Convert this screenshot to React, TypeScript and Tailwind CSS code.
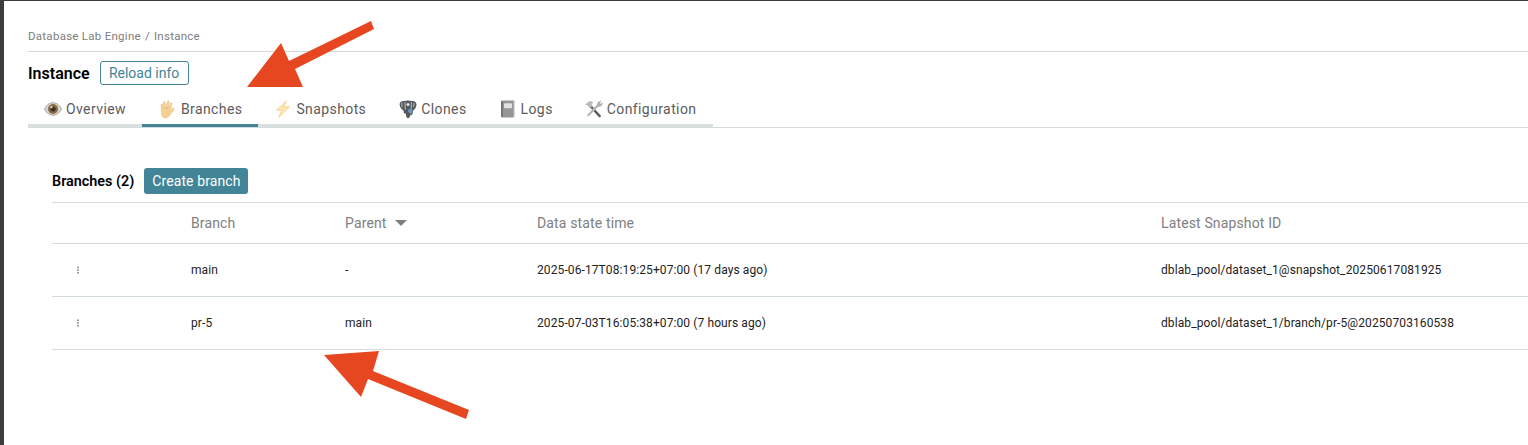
import React from "react";

const Eye = () => (
  <svg width="18" height="14" viewBox="0 0 18 14">
    <path d="M0.5 7C3 2.2 6 0.8 9 0.8S15 2.2 17.5 7C15 11.8 12 13.2 9 13.2S3 11.8 0.5 7Z" fill="#d9d5d0" stroke="#9a9490" strokeWidth="0.8" />
    <circle cx="9" cy="7" r="5" fill="#8a6a42" />
    <circle cx="9" cy="7" r="2.6" fill="#3a3028" />
    <circle cx="7.4" cy="5.2" r="1.1" fill="#e8e4de" />
  </svg>
);
const Hand = () => (
  <svg width="18" height="19" viewBox="0 0 18 19">
    <path d="M3 4.5C3 3.4 4.6 3.4 4.8 4.5L5.6 8.5L5.4 2.2C5.4 1 7.1 1 7.2 2.2L7.8 7.5L9.5 1.5C9.8 0.4 11.4 0.8 11.2 2L10.3 8L12.4 3.2C12.8 2.2 14.3 2.8 14 3.9L12.6 9.8L14.6 8.3C15.8 7.5 16.9 8.7 16 9.7L12.4 14.6C11.2 16.8 9.6 18 7.4 18C4.6 18 3.5 16 3.4 13L3 4.5Z" fill="#f5d092" stroke="#e9bc78" strokeWidth="0.4" />
    <path d="M7.6 8.2L9.9 8.4" stroke="#dca85e" strokeWidth="0.7" fill="none" />
  </svg>
);
const Bolt = () => (
  <svg width="16" height="18" viewBox="0 0 16 18">
    <path d="M11.5 0.5L1.5 10.2L6.6 10.2L3.8 17.5L14.5 6.8L9 6.8Z" fill="#fbe6b0" stroke="#f5c887" strokeWidth="0.7" strokeLinejoin="round" />
  </svg>
);
const Elephant = () => (
  <svg width="18" height="19" viewBox="0 0 18 19">
    <path d="M0.6 4.2C0.6 1.8 3 0.6 5.4 1C7.2 0.2 10.8 0.2 12.6 1C15 0.6 17.5 1.8 17.5 4.4C17.5 7.2 15.6 9.4 14.2 10.6L13.6 13.8C13.2 15.4 11.9 15.6 11.4 14.6C11.3 16.8 10.4 18.2 9 18.2C7.6 18.2 6.8 16 6.8 13.6C5 13.9 4.4 12.4 4.7 10.7C2.4 9.4 0.6 6.9 0.6 4.2Z" fill="#55585d" />
    <path d="M2.8 2.6L3 7.2M6 2L6.3 9.8M12.4 2.2L12.2 9M15 3L14.8 7" stroke="#c6c8cb" strokeWidth="0.9" fill="none" />
    <circle cx="9" cy="4.6" r="1.5" fill="#e3e4e6" />
    <path d="M9.2 9.2H13.4V13.6C11.8 14.2 10 13.2 9.2 11.6Z" fill="#6a97c4" />
  </svg>
);
const Book = () => (
  <svg width="17" height="18" viewBox="0 0 17 18">
    <path d="M2 1.5L3 0.5H15.2V16.6L14.2 17.5H3L2 16.5Z" fill="#969696" />
    <rect x="2" y="1" width="2" height="16" fill="#777777" />
    <rect x="5" y="3.2" width="8" height="5" rx="1" fill="#e2e2e0" />
    <rect x="14.4" y="1" width="1" height="15.5" fill="#bcbcbc" />
  </svg>
);
const Tools = () => (
  <svg width="19" height="18" viewBox="0 0 19 18">
    <path d="M4 4L15.5 16.5" stroke="#5d5d5d" strokeWidth="2.6" strokeLinecap="round" />
    <path d="M0.8 4.2L5 0.8L8.4 2.2L6.4 3.8L7.8 6.6L4.8 7.6L3.2 4.8Z" fill="#b9bcc0" stroke="#8d9094" strokeWidth="0.4" />
    <path d="M15.2 3.6L3.4 15.6" stroke="#b4b7bb" strokeWidth="2.4" strokeLinecap="round" />
    <path d="M13.2 5.2C12.6 2.8 14.4 0.6 16.8 0.9L14.8 3.2L16 4.6L18.2 2.6C18.6 5.2 16.2 7 13.8 6.2Z" fill="#b5b8bc" stroke="#8d9094" strokeWidth="0.4" />
  </svg>
);

const tabs = [
  { label: "Overview", icon: <Eye />, box: "flex w-[18px] justify-center" },
  { label: "Branches", icon: <Hand />, box: "flex w-[19px] justify-center", active: true },
  { label: "Snapshots", icon: <Bolt />, box: "flex w-[18px] justify-center" },
  { label: "Clones", icon: <Elephant />, box: "flex w-[19px] justify-center" },
  { label: "Logs", icon: <Book />, box: "flex w-[18px] justify-center" },
  { label: "Configuration", icon: <Tools />, box: "flex w-[18px] justify-center" },
];

const rows = [
  {
    branch: "main",
    parent: "-",
    time: "2025-06-17T08:19:25+07:00 (17 days ago)",
    snap: "dblab_pool/dataset_1@snapshot_20250617081925",
  },
  {
    branch: "pr-5",
    parent: "main",
    time: "2025-07-03T16:05:38+07:00 (7 hours ago)",
    snap: "dblab_pool/dataset_1/branch/pr-5@20250703160538",
  },
];

const Dots = () => (
  <svg width="4" height="8" viewBox="0 0 4 8" className="block">
    <rect x="1" y="0.5" width="2" height="1.6" fill="#9a9a9a" />
    <rect x="1" y="3.2" width="2" height="1.6" fill="#9a9a9a" />
    <rect x="1" y="5.9" width="2" height="1.6" fill="#9a9a9a" />
  </svg>
);

export default function App() {
  return (
    <div className="relative h-[445px] w-[1528px] overflow-hidden border-t border-l-4 border-[#3d3d3d] bg-white font-['Roboto',sans-serif]">
      <div className="pt-[28px]">
        <div className="ml-6 flex h-[23px] items-start gap-[4px] border-b border-[#d6d9d9] text-[11.5px] leading-[14px] tracking-[0.27px] text-[#7d7d7d]">
          <span>Database Lab Engine</span>
          <span>/</span>
          <span>Instance</span>
        </div>
        <div className="ml-6 mt-[9px] flex h-6 items-center gap-[10px]">
          <h1 className="pt-px text-[16px] font-semibold text-black">Instance</h1>
          <button className="flex h-6 w-[89px] items-center justify-center rounded-[3px] border border-[#428597] text-[14px] text-[#428597]">
            Reload info
          </button>
        </div>
        <div className="ml-6 mt-[9px] border-b border-[#d6dcdc]">
          <div className="flex w-[685px] border-b-[3px] border-[#d9e0e0]">
            {tabs.map((t) => (
              <div
                key={t.label}
                className={
                  t.active
                    ? "-mb-[3px] flex h-[33px] items-center gap-1 border-b-[3px] border-[#428597] px-4 text-[14px] tracking-[0.4px] text-[#5c5c5c]"
                    : "flex h-[30px] items-center gap-1 px-4 text-[14px] tracking-[0.4px] text-[#5c5c5c]"
                }
              >
                <span className={t.box}>{t.icon}</span>
                <span>{t.label}</span>
              </div>
            ))}
          </div>
        </div>
        <div className="ml-12 mt-[40px]">
          <div className="flex h-[26px] items-center gap-[10px]">
            <h2 className="pt-px text-[14.4px] font-semibold text-black">Branches (2)</h2>
            <button className="flex h-[26px] w-[104px] items-center justify-center rounded-[3px] bg-[#428597] text-[14px] tracking-[0.1px] text-white">
              Create branch
            </button>
          </div>
          <div className="mt-[8px] border-t border-[#d3dcdc]">
            <div className="grid h-[41px] grid-cols-[139px_154px_192px_624px_1fr] items-center border-b border-[#d3dcdc] text-[14px] tracking-[0.14px] text-[#808080]">
              <div />
              <div>Branch</div>
              <div className="flex items-center gap-[8px]">
                Parent
                <svg width="12" height="6" viewBox="0 0 12 6">
                  <path d="M0 0H12L6 6Z" fill="#808080" />
                </svg>
              </div>
              <div>Data state time</div>
              <div>Latest Snapshot ID</div>
            </div>
            {rows.map((r) => (
              <div
                key={r.branch}
                className="grid h-[53px] grid-cols-[139px_154px_192px_624px_1fr] items-center border-b border-[#d3dcdc] text-[12px] tracking-[0.1px] text-[#222222]"
              >
                <div className="pl-6">
                  <Dots />
                </div>
                <div>{r.branch}</div>
                <div>{r.parent}</div>
                <div>{r.time}</div>
                <div>{r.snap}</div>
              </div>
            ))}
          </div>
        </div>
      </div>
      <svg width="1528" height="445" viewBox="0 0 1528 445" className="pointer-events-none absolute -left-1 -top-px">
        <polygon points="371,21 374,29 295,69 303,87 247,87 281,43 289,61" fill="#e64720" />
        <polygon points="324,355 379,351 373,371 469,410 466,419 368,379 361,397" fill="#e64720" />
      </svg>
    </div>
  );
}
